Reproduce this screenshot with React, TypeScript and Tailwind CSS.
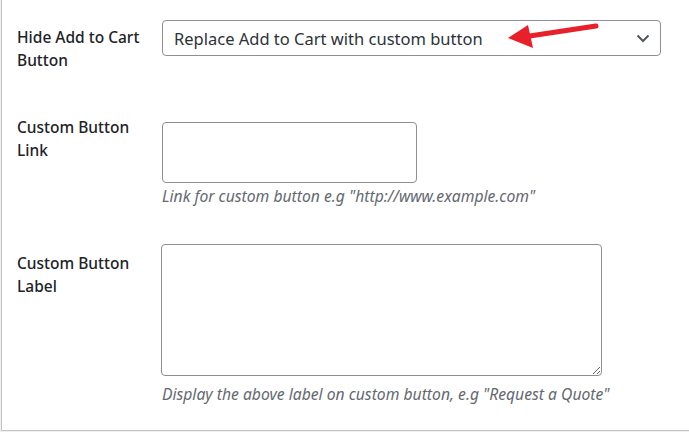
import React from 'react';

const font = { fontFamily: '"Segoe UI", "Noto Sans", Arial, sans-serif' };

const App: React.FC = () => {
  return (
    <div className="w-[689px] h-[432px] bg-[#f0f0f1] overflow-hidden" style={font}>
      <div className="relative ml-px h-[431px] bg-white border-l border-b border-[#c3c4c7] pl-[15px] pt-[20px] text-[15.5px] leading-[23px]">
        {/* Hide Add to Cart */}
        <div className="flex items-start">
          <label className="w-[145px] mt-[6px] font-medium text-[#1d2327]">
            Hide Add to Cart
            <br />
            Button
          </label>
          <div className="w-[499px] h-[36px] border border-[#8c8f94] rounded-[4px] flex items-center justify-between pl-[11px] pr-[10px] text-[16.5px] text-[#2c3338]">
            <span>Replace Add to Cart with custom button</span>
            <svg width="14" height="9" viewBox="0 0 14 9" fill="none">
              <path d="M1.5 1.5 L7 7 L12.5 1.5" stroke="#50575e" strokeWidth="2" />
            </svg>
          </div>
        </div>

        {/* Custom Button Link */}
        <div className="flex items-start mt-[44px]">
          <label className="w-[145px] font-medium text-[#1d2327]">
            Custom Button
            <br />
            Link
          </label>
          <div className="mt-[6px]">
            <input
              type="text"
              className="block w-[255px] h-[61px] border border-[#8c8f94] rounded-[4px] bg-white"
            />
            <p className="mt-[2px] italic text-[15.7px] leading-[22px] text-[#646970]">
              Link for custom button e.g "http://www.example.com"
            </p>
          </div>
        </div>

        {/* Custom Button Label */}
        <div className="flex items-start mt-[37px]">
          <label className="w-[144px] mt-[8px] font-medium text-[#1d2327]">
            Custom Button
            <br />
            Label
          </label>
          <div>
            <textarea className="block w-[441px] h-[132px] border border-[#8c8f94] rounded-[4px] bg-white" />
            <p className="mt-[7px] ml-px italic text-[15.7px] leading-[22px] text-[#646970]">
              Display the above label on custom button, e.g "Request a Quote"
            </p>
          </div>
        </div>

        {/* red annotation arrow */}
        <svg
          className="absolute left-[499px] top-[15px]"
          width="105"
          height="40"
          viewBox="0 0 105 40"
          fill="none"
        >
          <line x1="22" y1="22" x2="95" y2="11" stroke="#e8202a" strokeWidth="5" strokeLinecap="round" />
          <polygon points="7,23 27,10 32,33" fill="#e8202a" />
        </svg>
      </div>
    </div>
  );
};

export default App;
